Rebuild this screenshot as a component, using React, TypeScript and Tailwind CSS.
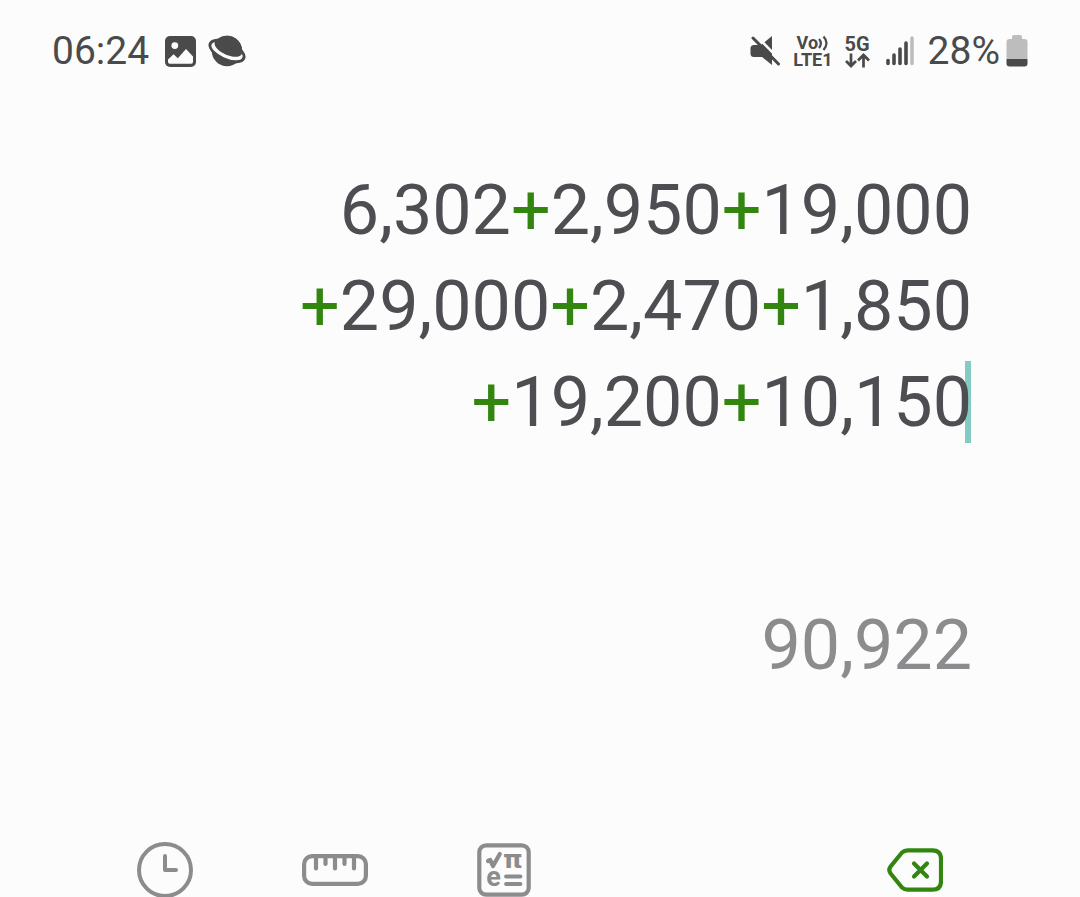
import { Fragment } from "react";

const lines = ["6,302+2,950+19,000", "+29,000+2,470+1,850", "+19,200+10,150"];

function Expression({ text }: { text: string }) {
  return (
    <>
      {text.split(/(\+)/).map((part, i) =>
        part === "+" ? (
          <span key={i} className="text-[#328610]">
            +
          </span>
        ) : (
          <Fragment key={i}>{part}</Fragment>
        ),
      )}
    </>
  );
}

function PictureIcon() {
  return (
    <svg width="31" height="31" viewBox="0 0 31 31" aria-hidden="true">
      <rect width="31" height="31" rx="5" fill="#4a4a4a" />
      <circle cx="9.8" cy="9.6" r="3.4" fill="#fcfcfc" />
      <path d="M3 23.5 8.6 18.3 12.8 22.2 21 13 28 20.4V26Q28 27.8 26.2 27.8H4.8Q3 27.8 3 26Z" fill="#fcfcfc" />
    </svg>
  );
}

function PlanetIcon() {
  return (
    <svg width="38" height="32" viewBox="-19 -16 38 32" aria-hidden="true">
      <circle r="15.2" fill="#4a4a4a" />
      <g transform="rotate(24)">
        <ellipse rx="19.8" ry="10" fill="#4a4a4a" />
        <ellipse rx="16.8" ry="7" fill="#fcfcfc" />
        <path d="M-14.8 -3A15.1 15.1 0 0 1 14.8 -3C13 6 -13 6 -14.8 -3Z" fill="#4a4a4a" />
      </g>
    </svg>
  );
}

function MuteIcon() {
  return (
    <svg width="31" height="32" viewBox="0 0 31 32" aria-hidden="true">
      <path d="M22 1V30L12 22H4Q0.5 22 0.5 18.5V13.5Q0.5 10 4 10H11Z" fill="#4a4a4a" />
      <path d="M6.5 1 31 26" stroke="#fcfcfc" strokeWidth="2.5" />
      <path d="M3 3 28.5 29" stroke="#4a4a4a" strokeWidth="3" strokeLinecap="round" />
    </svg>
  );
}

function WavesIcon() {
  return (
    <svg width="11" height="16" viewBox="0 0 11 16" fill="none" stroke="#4a4a4a" strokeWidth="2.2" aria-hidden="true">
      <path d="M1 4Q4.8 8.2 1 13M5.5 1.5Q11.5 8 5.5 15" />
    </svg>
  );
}

function TransferIcon() {
  return (
    <svg width="25" height="15" viewBox="0 0 25 15" fill="none" stroke="#4a4a4a" strokeWidth="2.7" aria-hidden="true">
      <path d="M6 0.5V13M1 8 6 13 11 8M18.5 14.5V2M13 7.5 18.5 2 24 7.5" />
    </svg>
  );
}

function SignalIcon() {
  return (
    <svg width="28" height="30" viewBox="0 0 28 30" strokeWidth="3.6" strokeLinecap="round" aria-hidden="true">
      <path d="M2 24.5V27.5M8 19V27.5M14 13V27.5M20 7V27.5" stroke="#4a4a4a" />
      <path d="M26 2V27.5" stroke="#bdbdbd" />
    </svg>
  );
}

function BatteryIcon() {
  return (
    <svg width="22" height="32" viewBox="0 0 22 32" aria-hidden="true">
      <path d="M6 4V2Q6 0 8 0H14Q16 0 16 2V4H18.5Q21.5 4 21.5 7V24H0.5V7Q0.5 4 3.5 4Z" fill="#bdbdbd" />
      <path d="M0.5 24H21.5V28.5Q21.5 31.5 18.5 31.5H3.5Q0.5 31.5 0.5 28.5Z" fill="#4a4a4a" />
    </svg>
  );
}

function ClockIcon() {
  return (
    <svg width="56" height="56" viewBox="0 0 56 56" fill="none" stroke="#8c8c8e" strokeWidth="4" aria-hidden="true">
      <circle cx="28" cy="28" r="26" />
      <path d="M28 14V28H39" strokeLinecap="round" strokeLinejoin="round" />
    </svg>
  );
}

function RulerIcon() {
  return (
    <svg width="66" height="32" viewBox="0 0 66 32" fill="none" stroke="#8c8c8e" strokeWidth="4.2" aria-hidden="true">
      <rect x="2.1" y="2.1" width="61.8" height="27.8" rx="8" />
      <path d="M14 3V14.5M23.5 3V10M33 3V14.5M42.5 3V10M52 3V14.5" strokeLinecap="round" />
    </svg>
  );
}

function ScientificIcon() {
  return (
    <svg width="54" height="54" viewBox="0 0 54 54" fill="none" stroke="#8c8c8e" strokeWidth="4.2" aria-hidden="true">
      <rect x="2.3" y="2.3" width="49.4" height="49.4" rx="7" />
      <path d="M11 18 13.2 17 16 23 22.8 11" strokeLinecap="round" strokeLinejoin="round" />
      <path d="M29 33.5H43.5M29 41H43.5" strokeWidth="3.8" strokeLinecap="round" />
      <g fill="#8c8c8e" stroke="none" className="font-bold">
        <text x="36" y="24.5" fontSize="25" textAnchor="middle" className="font-['DejaVu_Sans',sans-serif]">π</text>
        <text x="16.5" y="43" fontSize="27" textAnchor="middle">e</text>
      </g>
    </svg>
  );
}

function BackspaceIcon() {
  return (
    <svg width="56" height="44" viewBox="0 0 56 44" fill="none" stroke="#328610" strokeWidth="4.2" strokeLinecap="round" strokeLinejoin="round" aria-hidden="true">
      <path d="M20.5 2.3H45.5Q54 2.3 54 10.8V33.2Q54 41.7 45.5 41.7H20.5Q17.5 41.7 15 39.5L3.6 25.5Q1 22 3.6 18.5L15 4.5Q17.5 2.3 20.5 2.3Z" />
      <path d="M27 15.5 40 28.5M40 15.5 27 28.5" />
    </svg>
  );
}

export default function App() {
  return (
    <div className="flex h-screen flex-col overflow-hidden bg-[#fcfcfc] font-['Roboto',sans-serif] text-[#4a4a4a]">
      <header className="flex h-[102px] shrink-0 items-center justify-between px-[52px]">
        <div className="flex items-center">
          <time className="text-[39px] leading-[48px]">06:24</time>
          <span className="ml-4 flex items-center gap-3">
            <PictureIcon />
            <PlanetIcon />
          </span>
        </div>
        <div className="flex items-center gap-3">
          <MuteIcon />
          <div className="flex flex-col items-center text-[18px] font-bold leading-[17px]">
            <span className="flex items-center">
              Vo
              <WavesIcon />
            </span>
            <span>LTE1</span>
          </div>
          <div className="flex flex-col items-center text-[20px] font-bold leading-[18px]">
            <span>5G</span>
            <TransferIcon />
          </div>
          <span className="ml-1 mr-0.5">
            <SignalIcon />
          </span>
          <span className="flex items-center gap-[6px]">
            <span className="text-[39px] leading-[48px]">28%</span>
            <BatteryIcon />
          </span>
        </div>
      </header>

      <main className="flex grow flex-col items-end pr-[108px] pt-[60px] text-[70px]">
        <div className="isolate text-right leading-[96px] text-[#4d4d52]">
          {lines.map((line, i) => (
            <div key={line} className="relative">
              <Expression text={line} />
              {i === lines.length - 1 && (
                <span className="absolute right-px top-[7px] -z-10 h-[82px] w-[6px] bg-[#84cbc3]" />
              )}
            </div>
          ))}
        </div>
        <output className="mt-[147px] leading-[96px] text-[#8c8c8e]">90,922</output>
      </main>

      <nav className="flex h-[55px] shrink-0 items-start px-[137px]">
        <div className="flex h-[56px] shrink-0 grow items-center">
          <button type="button" aria-label="History">
            <ClockIcon />
          </button>
          <button type="button" aria-label="Unit converter" className="ml-[109px]">
            <RulerIcon />
          </button>
          <button type="button" aria-label="Scientific mode" className="ml-[109px]">
            <ScientificIcon />
          </button>
          <button type="button" aria-label="Delete" className="ml-auto">
            <BackspaceIcon />
          </button>
        </div>
      </nav>
    </div>
  );
}
